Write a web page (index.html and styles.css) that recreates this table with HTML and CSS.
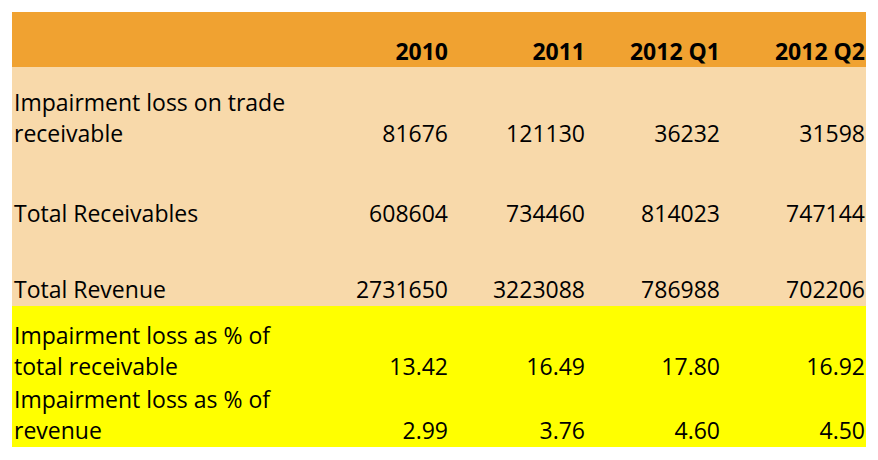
FILE: index.html
```html
<!DOCTYPE html>
<html lang="en">
<head>
<meta charset="utf-8">
<title>Impairment loss</title>
<link rel="stylesheet" href="styles.css">
</head>
<body>
<div class="sheet">
  <div class="row head">
    <div class="cell label"></div>
    <div class="cell num">2010</div>
    <div class="cell num">2011</div>
    <div class="cell num">2012 Q1</div>
    <div class="cell num">2012 Q2</div>
  </div>
  <div class="row peach r1">
    <div class="cell label">Impairment loss on trade<br>receivable</div>
    <div class="cell num">81676</div>
    <div class="cell num">121130</div>
    <div class="cell num">36232</div>
    <div class="cell num">31598</div>
  </div>
  <div class="row peach r2">
    <div class="cell label">Total Receivables</div>
    <div class="cell num">608604</div>
    <div class="cell num">734460</div>
    <div class="cell num">814023</div>
    <div class="cell num">747144</div>
  </div>
  <div class="row peach r3">
    <div class="cell label">Total Revenue</div>
    <div class="cell num">2731650</div>
    <div class="cell num">3223088</div>
    <div class="cell num">786988</div>
    <div class="cell num">702206</div>
  </div>
  <div class="row yellow r4">
    <div class="cell label">Impairment loss as % of<br>total receivable</div>
    <div class="cell num">13.42</div>
    <div class="cell num">16.49</div>
    <div class="cell num">17.80</div>
    <div class="cell num">16.92</div>
  </div>
  <div class="row yellow r5">
    <div class="cell label">Impairment loss as % of<br>revenue</div>
    <div class="cell num">2.99</div>
    <div class="cell num">3.76</div>
    <div class="cell num">4.60</div>
    <div class="cell num">4.50</div>
  </div>
</div>
</body>
</html>
```
FILE: styles.css
```css
html, body {
  margin: 0;
  padding: 0;
  background: #ffffff;
}
body {
  font-family: "Open Sans", "Liberation Sans", sans-serif;
  font-size: 23px;
  line-height: 31px;
  color: #000000;
}
.sheet {
  margin: 12px 0 0 12px;
  width: 854px;
}
.row {
  display: grid;
  grid-template-columns: 298px 139px 137px 135px 145px;
  align-items: end;
  padding-bottom: 1px;
  box-sizing: border-box;
}
.cell {
  white-space: nowrap;
}
.label {
  padding-left: 2px;
}
.num {
  text-align: right;
  padding-right: 1px;
}
.head {
  background: #f0a231;
  height: 55px;
  padding-bottom: 0;
  font-weight: 700;
}
.peach {
  background: #f8d9aa;
}
.yellow {
  background: #ffff00;
}
.r1 { height: 83px; }
.r2 { height: 80px; }
.r3 { height: 76px; }
.r4 { height: 77px; }
.r5 { height: 64px; }
```
